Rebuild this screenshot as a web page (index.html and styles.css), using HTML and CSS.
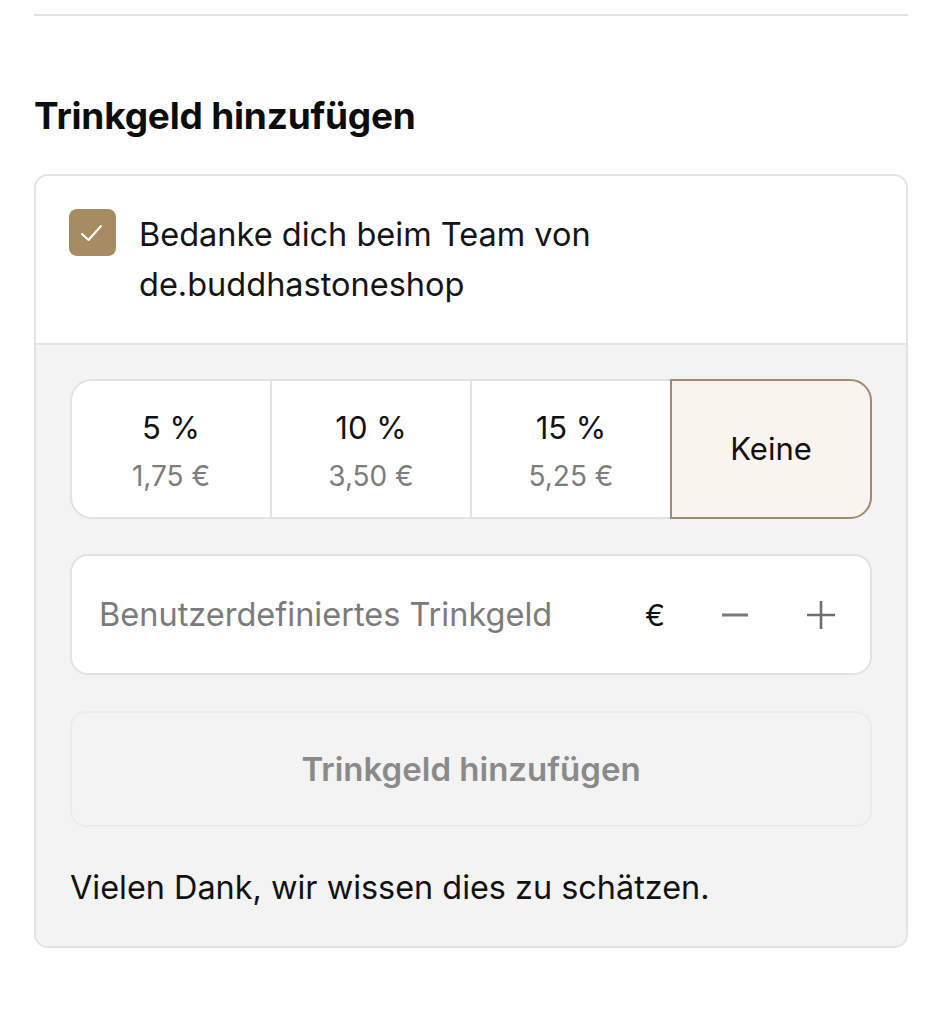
FILE: index.html
```html
<!DOCTYPE html>
<html lang="de">
<head>
    <meta charset="UTF-8">
    <title>Trinkgeld hinzufügen</title>
    <link rel="stylesheet" href="styles.css">
</head>
<body>
<div class="page">
    <div class="rule"></div>

    <h2 class="title">Trinkgeld hinzufügen</h2>

    <div class="tipCard">
        <div class="tipHead">
            <span class="check">
                <svg width="47" height="47" viewBox="0 0 47 47">
                    <path d="M13 25 L19.5 31 L32 17" fill="none" stroke="#fff" stroke-width="2" stroke-linecap="round" stroke-linejoin="round"/>
                </svg>
            </span>
            <p class="thanks">Bedanke dich beim Team von<br>de.buddhastoneshop</p>
        </div>

        <div class="tipBody">
            <ul class="options">
                <li>
                    <span class="pct">5 %</span>
                    <span class="amount">1,75 €</span>
                </li>
                <li>
                    <span class="pct">10 %</span>
                    <span class="amount">3,50 €</span>
                </li>
                <li>
                    <span class="pct">15 %</span>
                    <span class="amount">5,25 €</span>
                </li>
                <li class="on">
                    <span class="pct">Keine</span>
                </li>
            </ul>

            <div class="custom">
                <span class="placeholder">Benutzerdefiniertes Trinkgeld</span>
                <span class="euro">€</span>
                <span class="step">
                    <svg width="28" height="28" viewBox="0 0 28 28">
                        <path d="M1 14 H27" stroke="#7a7a7a" stroke-width="3"/>
                    </svg>
                </span>
                <span class="step">
                    <svg width="30" height="30" viewBox="0 0 30 30">
                        <path d="M1 15 H29 M15 1 V29" stroke="#6e6e6e" stroke-width="2.6"/>
                    </svg>
                </span>
            </div>

            <div class="addBtn">Trinkgeld hinzufügen</div>

            <p class="note">Vielen Dank, wir wissen dies zu schätzen.</p>
        </div>
    </div>
</div>
</body>
</html>
```

FILE: styles.css
```css
* {
    margin: 0;
    padding: 0;
    box-sizing: border-box;
}

body {
    background: #fff;
    font-family: Inter, "Liberation Sans", Helvetica, sans-serif;
    color: #111;
}

ul, li {
    list-style: none;
}

.page {
    padding: 14px 34px 0;
}

.rule {
    height: 2px;
    background: #e3e3e3;
}

.title {
    margin-top: 80px;
    font-size: 37px;
    line-height: 40px;
    font-weight: 700;
    letter-spacing: -0.2px;
    color: #0c0c0c;
}

.tipCard {
    margin-top: 38px;
    border: 2px solid #e2e2e2;
    border-radius: 14px;
    overflow: hidden;
}

.tipHead {
    display: flex;
    align-items: flex-start;
    gap: 23px;
    padding: 33px 33px 33px;
    background: #fff;
}

.check {
    flex: none;
    display: flex;
    width: 47px;
    height: 47px;
    border-radius: 8px;
    background: #a78b62;
}

.thanks {
    font-size: 32.5px;
    line-height: 50px;
    margin-top: 1px;
    color: #141414;
}

.tipBody {
    padding: 34px 34px 38px;
    background: #f3f3f3;
    border-top: 2px solid #e4e4e4;
}

.options {
    display: flex;
    height: 140px;
    background: #fff;
    border: 2px solid #e2e2e2;
    border-radius: 22px;
}

.options li {
    flex: 1;
    display: flex;
    flex-direction: column;
    align-items: center;
    justify-content: center;
    gap: 13px;
    padding-top: 5px;
    border-left: 2px solid #e2e2e2;
}

.options li:first-child {
    border-left: none;
}

.options li.on {
    margin: -2px -2px -2px 0;
    padding-top: 0;
    border: 2px solid #a38c6c;
    border-radius: 0 22px 22px 0;
    background: #faf4ef;
}

.pct {
    font-size: 31px;
    line-height: 36px;
    color: #111;
}

.amount {
    font-size: 28px;
    line-height: 34px;
    color: #7d7d7d;
}

.custom {
    display: flex;
    align-items: center;
    margin-top: 35px;
    height: 121px;
    padding: 0 34px 0 27px;
    background: #fff;
    border: 2px solid #e2e2e2;
    border-radius: 18px;
}

.placeholder {
    flex: 1;
    font-size: 32.5px;
    color: #7b7b7b;
}

.euro {
    font-size: 30px;
    color: #111;
    margin-right: 56px;
}

.step {
    display: flex;
}

.step + .step {
    margin-left: 57px;
}

.addBtn {
    display: flex;
    align-items: center;
    justify-content: center;
    margin-top: 36px;
    height: 116px;
    border: 2px solid #ebebeb;
    border-radius: 16px;
    font-size: 33px;
    font-weight: 600;
    color: #8a8a8a;
}

.note {
    margin-top: 41px;
    font-size: 32.4px;
    line-height: 40px;
    color: #111;
}
```
